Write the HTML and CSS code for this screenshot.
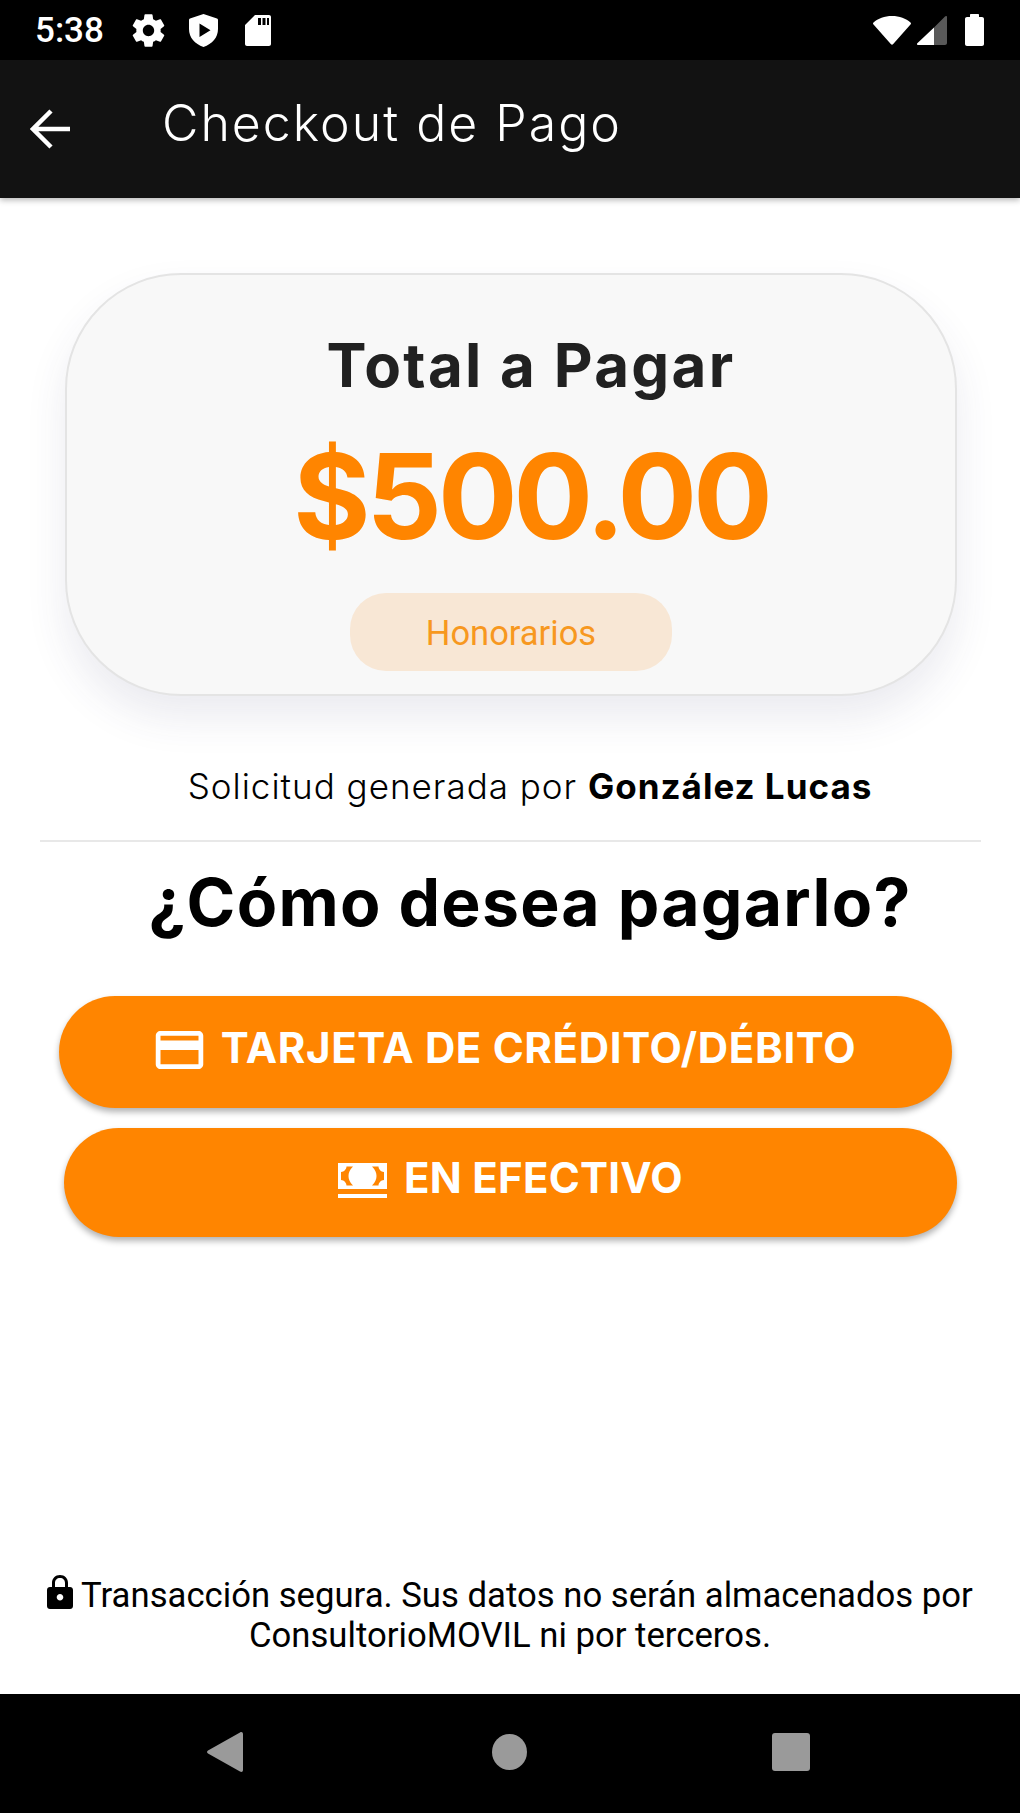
FILE: index.html
```html
<!DOCTYPE html>
<html lang="es">
<head>
<meta charset="utf-8">
<title>Checkout de Pago</title>
<link rel="stylesheet" href="styles.css">
</head>
<body>
<div class="screen">
  <div class="statusbar">
    <div class="status-left">
      <span class="clock">5:38</span>
      <svg class="ic-gear" viewBox="0 0 24 24"><path fill="#fff" d="M19.43 12.98c.04-.32.07-.64.07-.98s-.03-.66-.07-.98l2.11-1.65c.19-.15.24-.42.12-.64l-2-3.46c-.12-.22-.39-.3-.61-.22l-2.49 1c-.52-.4-1.08-.73-1.69-.98l-.38-2.65C14.46 2.18 14.25 2 14 2h-4c-.25 0-.46.18-.49.42l-.38 2.65c-.61.25-1.17.59-1.69.98l-2.49-1c-.23-.09-.49 0-.61.22l-2 3.46c-.13.22-.07.49.12.64l2.11 1.65c-.04.32-.07.65-.07.98s.03.66.07.98l-2.11 1.65c-.19.15-.24.42-.12.64l2 3.46c.12.22.39.3.61.22l2.49-1c.52.4 1.08.73 1.69.98l.38 2.65c.03.24.24.42.49.42h4c.25 0 .46-.18.49-.42l.38-2.65c.61-.25 1.17-.59 1.69-.98l2.49 1c.23.09.49 0 .61-.22l2-3.46c.12-.22.07-.49-.12-.64l-2.11-1.65zM12 15.5c-1.93 0-3.5-1.57-3.5-3.5s1.57-3.5 3.5-3.5 3.5 1.57 3.5 3.5-1.57 3.5-3.5 3.5z"/></svg>
      <svg class="ic-shield" viewBox="0 0 29 33"><path fill="#fff" fill-rule="evenodd" d="M14.5 0 28 4.5c.6.2 1 .7 1 1.4V15c0 8.5-5.700 15-14.500 18C5.700 30 0 23.500 0 15V5.900c0-.7.4-1.200 1-1.400L14.500 0zM10.500 9.500v13.500l11-6.750z"/></svg>
      <svg class="ic-sd" viewBox="0 0 26 31"><path fill="#fff" fill-rule="evenodd" d="M10 0h14c1.100 0 2 .9 2 2v27c0 1.100-.9 2-2 2H2c-1.100 0-2-.9-2-2V10zM13 3v7h3V3zm4.500 0v7h3V3zM22 3v7h2V3z"/></svg>
    </div>
    <div class="status-right">
      <svg class="ic-wifi" viewBox="0 0 38 29"><path fill="#fff" d="M19 0C11.500 0 5 2.500.5 6.500c-.6.5-.6 1.200-.2 1.700L18 28.300c.5.6 1.500.6 2 0L37.700 8.200c.4-.5.4-1.200-.2-1.700C33 2.500 26.500 0 19 0z"/></svg>
      <svg class="ic-signal" viewBox="0 0 30 29"><path fill="#595959" d="M29 0c.6 0 1 .4 1 1v26c0 1.100-.9 2-2 2H17V11.500L28 .5c.3-.3.6-.5 1-.5z"/><path fill="#fff" d="M17 11.500V29H1c-.9 0-1.300-1-.7-1.700z"/></svg>
      <svg class="ic-battery" viewBox="0 0 19 32"><path fill="#fff" d="M6 0h7c.6 0 1 .4 1 1v2h3c1.100 0 2 .9 2 2v25c0 1.100-.9 2-2 2H2c-1.100 0-2-.9-2-2V5c0-1.100.9-2 2-2h3V1c0-.6.4-1 1-1z"/></svg>
    </div>
  </div>

  <header class="appbar">
    <svg class="ic-back" viewBox="0 0 40 40"><path fill="none" stroke="#fff" stroke-width="4.500" d="M40 20H4M21 2 3 20l18 18"/></svg>
    <h1 class="appbar-title">Checkout de Pago</h1>
  </header>

  <main class="content">
    <section class="card">
      <h2 class="card-label">Total a Pagar</h2>
      <div class="card-amount">$500.00</div>
      <div class="chip">Honorarios</div>
    </section>

    <p class="requester">Solicitud generada por <strong>González Lucas</strong></p>
    <hr class="divider">
    <h2 class="question">¿Cómo desea pagarlo?</h2>

    <button class="pay pay-card" type="button">
      <svg class="ic-card" viewBox="2 4 20 16"><path fill="#fff" d="M20 4H4c-1.110 0-1.990.89-1.990 2L2 18c0 1.110.89 2 2 2h16c1.110 0 2-.89 2-2V6c0-1.110-.89-2-2-2zm0 14H4v-6h16v6zm0-10H4V6h16v2z"/></svg>
      <span class="pay-text">TARJETA DE CRÉDITO/DÉBITO</span>
    </button>
    <button class="pay pay-cash" type="button">
      <svg class="ic-cash" viewBox="0 0 49 35"><path fill="#fff" fill-rule="evenodd" d="M0 0h49v26H0zM8.500 3.500H15C11.500 7 10.500 10 10.500 13s1 6 4.500 9.500H8.500C8.500 20 6 17 3 17V9c3 0 5.500-3 5.500-5.500zM40.500 3.500H34C37.500 7 38.500 10 38.500 13s-1 6-4.500 9.500h6.500c0-2.500 2.500-5.500 5.500-5.500V9c-3 0-5.500-3-5.500-5.500z"/><path fill="#fff" d="M0 31h49v4H0z"/></svg>
      <span class="pay-text">EN EFECTIVO</span>
    </button>

    <p class="secure">
      <svg class="ic-lock" viewBox="0 0 26 34"><path fill="#000" fill-rule="evenodd" d="M13 0c4.700 0 8 3.300 8 8v4h2c1.700 0 3 1.300 3 3v16c0 1.700-1.300 3-3 3H3c-1.700 0-3-1.300-3-3V15c0-1.700 1.300-3 3-3h2V8c0-4.700 3.300-8 8-8zm0 3c-3 0-5 2-5 5v4h10V8c0-3-2-5-5-5zm0 16c-1.800 0-3.300 1.500-3.300 3.300s1.500 3.300 3.300 3.300 3.300-1.500 3.300-3.300S14.800 19 13 19z"/></svg>
      Transacción segura. Sus datos no serán almacenados por<br>ConsultorioMOVIL ni por terceros.
    </p>
  </main>

  <nav class="navbar">
    <svg class="nav-back" viewBox="0 0 36 40"><path fill="#9a9a9a" d="M33 .5c1.500-1 3-.2 3 1.500v36c0 1.700-1.500 2.500-3 1.500L1 21.500c-1.300-.8-1.300-2.200 0-3z"/></svg>
    <span class="nav-home"></span>
    <span class="nav-recent"></span>
  </nav>
</div>
</body>
</html>
```

FILE: styles.css
```css
* { box-sizing: border-box; }
html, body { margin: 0; padding: 0; background: #fff; }
.screen {
  width: 1020px;
  height: 1813px;
  display: flex;
  flex-direction: column;
  overflow: hidden;
  font-family: "Inter", "Liberation Sans", sans-serif;
}

.statusbar {
  height: 60px;
  flex: none;
  background: #000;
  display: flex;
  align-items: center;
  justify-content: space-between;
  padding: 0 36px 0 35px;
}
.status-left { display: flex; align-items: center; }
.clock {
  font: 500 35px/40px "Roboto", sans-serif;
  color: #fff;
  width: 94px;
  padding-top: 2px;
}
.ic-gear { width: 39px; height: 39px; margin-right: 21px; }
.ic-shield { width: 29px; height: 33px; margin-right: 27px; }
.ic-sd { width: 26px; height: 31px; }
.status-right { display: flex; align-items: center; }
.ic-wifi { width: 38px; height: 29px; margin-right: 6px; }
.ic-signal { width: 30px; height: 29px; margin-right: 18px; }
.ic-battery { width: 19px; height: 32px; }

.appbar {
  height: 138px;
  flex: none;
  background: #121212;
  display: flex;
  align-items: center;
  padding-left: 30px;
  position: relative;
  box-shadow: 0 2px 6px rgba(0, 0, 0, 0.3);
}
.ic-back { width: 40px; height: 40px; margin-right: 92px; }
.appbar-title {
  margin: 0 0 12px;
  font-weight: 300;
  font-size: 50px;
  line-height: 60px;
  letter-spacing: 2px;
  color: #fff;
}

.content {
  flex: 1;
  display: flex;
  flex-direction: column;
  align-items: stretch;
  padding-top: 75px;
}

.card {
  width: 892px;
  height: 423px;
  margin-left: 65px;
  background: #f8f8f8;
  border: 2px solid #e4e4e4;
  border-radius: 116px;
  box-shadow: 0 22px 40px rgba(60, 60, 110, 0.1);
  display: flex;
  flex-direction: column;
  align-items: center;
}
.card-label {
  margin: 58px 0 0 40px;
  font-weight: 700;
  font-size: 60px;
  line-height: 64px;
  letter-spacing: 2.3px;
  color: #212121;
}
.card-amount {
  margin: 37px 0 0 40px;
  font-weight: 700;
  font-size: 118px;
  line-height: 124px;
  letter-spacing: -4px;
  color: #ff8500;
}
.chip {
  width: 322px;
  height: 78px;
  margin-top: 35px;
  border-radius: 36px;
  background: #f8e7d5;
  color: #f7981f;
  font: 400 34.5px/80px "Roboto", sans-serif;
  text-align: center;
}

.requester {
  margin: 69px 0 0 40px;
  font-size: 35px;
  line-height: 42px;
  font-weight: 300;
  letter-spacing: 1px;
  color: #000;
  text-align: center;
}
.requester strong { font-weight: 700; }
.divider {
  width: 941px;
  height: 2px;
  margin: 33px 0 0 40px;
  border: 0;
  background: #e8e8e8;
}
.question {
  margin: 22px 0 0 40px;
  font-weight: 700;
  font-size: 66px;
  line-height: 76px;
  letter-spacing: 1.25px;
  color: #000;
  text-align: center;
}

.pay {
  height: 112px;
  width: 893px;
  border: 0;
  border-radius: 56px;
  background: #ff8500;
  box-shadow: 0 4px 6px rgba(0, 0, 0, 0.3);
  color: #fff;
  font-family: inherit;
  font-weight: 700;
  font-size: 42px;
  display: flex;
  align-items: center;
  justify-content: center;
  padding: 0;
}
.pay-text { padding-bottom: 10px; }
.pay-card { margin: 56px 0 0 59px; }
.pay-card .pay-text { letter-spacing: 0.65px; }
.pay-cash { margin: 20px 0 0 64px; height: 109px; }
.pay-cash .pay-text { letter-spacing: 0.25px; }
.ic-card { width: 49px; height: 38px; margin: 0 17px 4px 0; }
.ic-cash { width: 49px; height: 35px; margin: 0 17px 4px 0; }

.secure {
  margin: auto 0 39px;
  font: 400 34.7px/40px "Roboto", sans-serif;
  color: #000;
  text-align: center;
}
.ic-lock { width: 26px; height: 34px; vertical-align: -2px; }

.navbar {
  height: 119px;
  flex: none;
  background: #000;
  position: relative;
  display: flex;
  align-items: center;
  padding: 0 0 4px 207px;
}
.nav-back { width: 36px; height: 40px; }
.nav-home {
  width: 35px;
  height: 36px;
  margin-left: 249px;
  border-radius: 50%;
  background: #9a9a9a;
}
.nav-recent {
  width: 38px;
  height: 38px;
  margin-left: 245px;
  border-radius: 3px;
  background: #9a9a9a;
}
```
